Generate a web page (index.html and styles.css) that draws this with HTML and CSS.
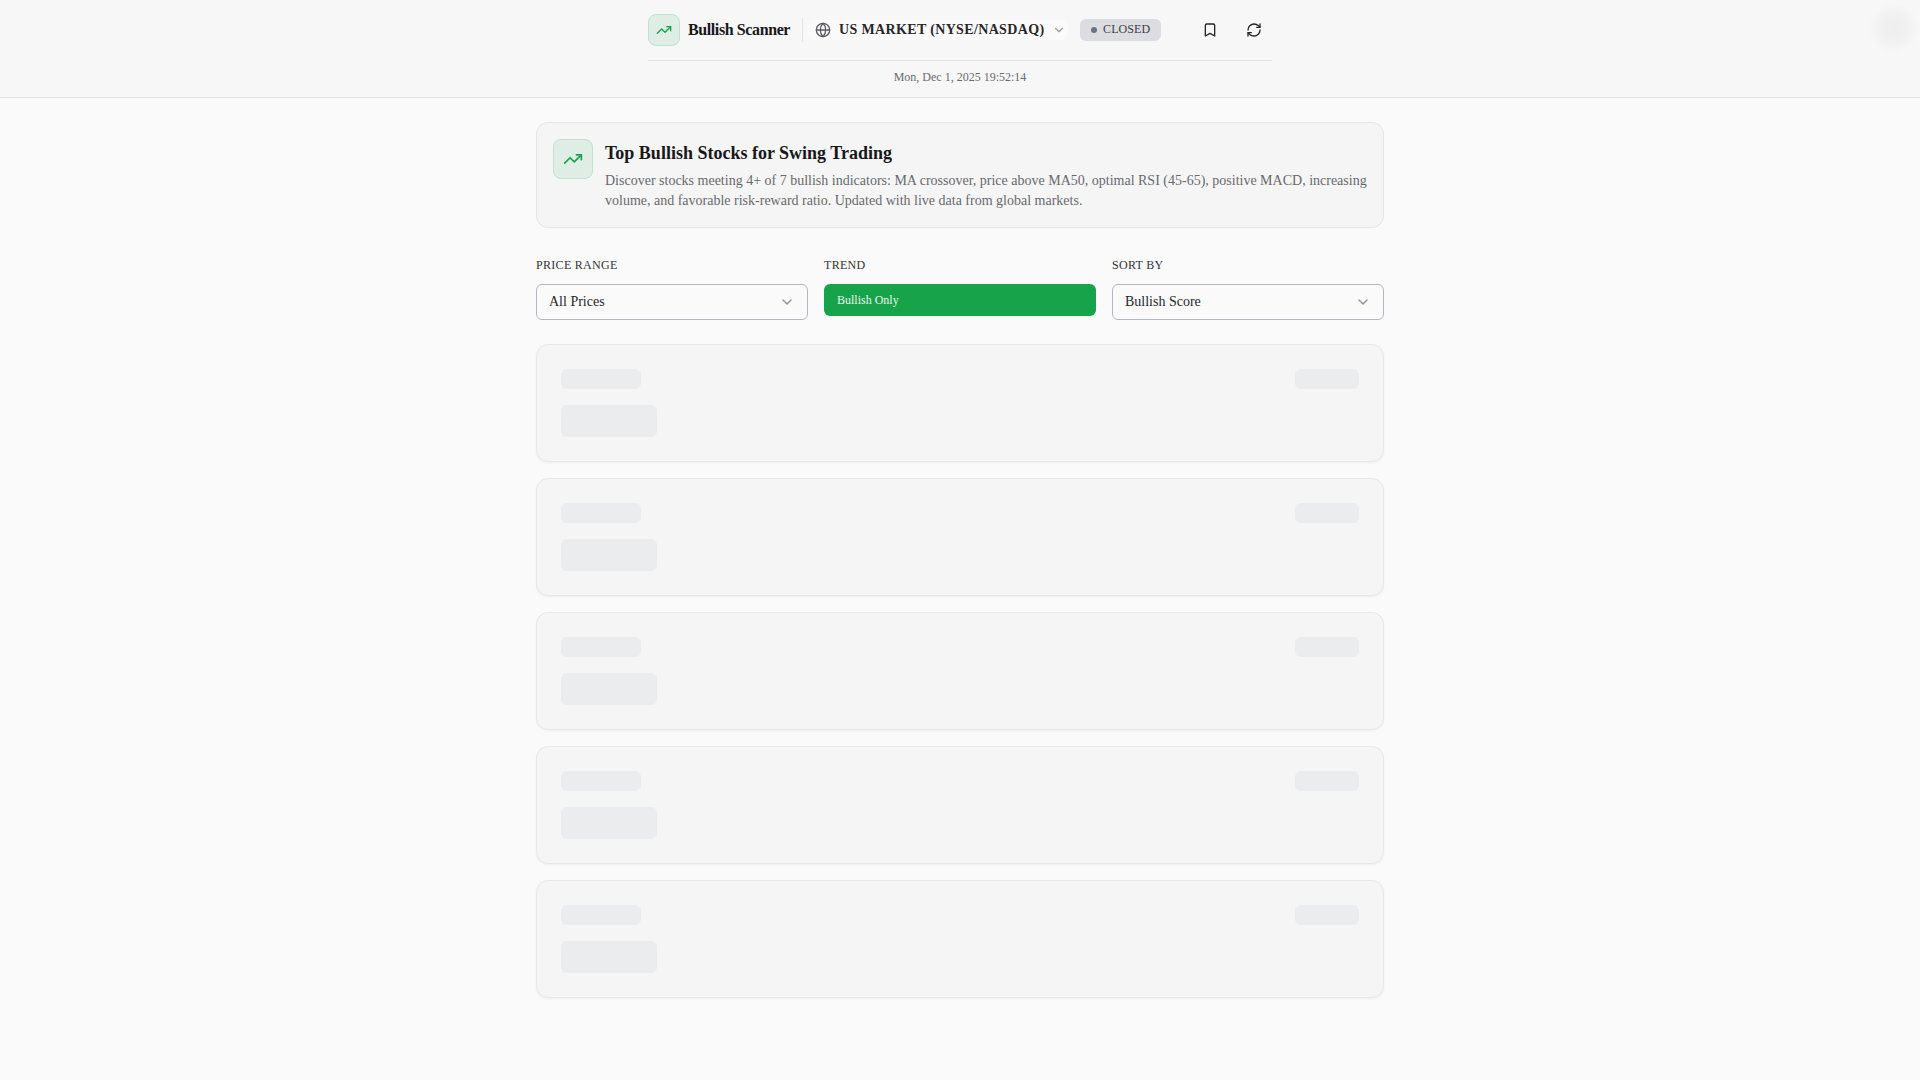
FILE: index.html
```html
<!DOCTYPE html>
<html lang="en">
<head>
<meta charset="utf-8">
<title>Bullish Scanner</title>
<link rel="stylesheet" href="styles.css">
</head>
<body>
<header class="header">
  <div class="header-inner">
    <div class="top-row">
      <div class="brand">
        <span class="logo logo-sm">
          <svg width="16" height="16" viewBox="0 0 24 24" fill="none" stroke="currentColor" stroke-width="2" stroke-linecap="round" stroke-linejoin="round"><polyline points="22 7 13.5 15.5 8.5 10.5 2 17"/><polyline points="16 7 22 7 22 13"/></svg>
        </span>
        <span class="brand-name">Bullish Scanner</span>
      </div>
      <span class="divider"></span>
      <div class="market">
        <svg class="globe" width="16" height="16" viewBox="0 0 24 24" fill="none" stroke="currentColor" stroke-width="2" stroke-linecap="round" stroke-linejoin="round"><circle cx="12" cy="12" r="10"/><path d="M12 2a14.5 14.5 0 0 0 0 20 14.5 14.5 0 0 0 0-20"/><path d="M2 12h20"/></svg>
        <span class="market-name">US MARKET (NYSE/NASDAQ)</span>
        <svg class="chev" width="14" height="14" viewBox="0 0 24 24" fill="none" stroke="currentColor" stroke-width="2" stroke-linecap="round" stroke-linejoin="round"><path d="m6 9 6 6 6-6"/></svg>
      </div>
      <div class="status"><span class="dot"></span>CLOSED</div>
      <div class="actions">
        <button class="icon-btn" aria-label="Saved">
          <svg width="16" height="16" viewBox="0 0 24 24" fill="none" stroke="currentColor" stroke-width="2" stroke-linecap="round" stroke-linejoin="round"><path d="m19 21-7-4-7 4V5a2 2 0 0 1 2-2h10a2 2 0 0 1 2 2v16z"/></svg>
        </button>
        <button class="icon-btn" aria-label="Refresh">
          <svg width="16" height="16" viewBox="0 0 24 24" fill="none" stroke="currentColor" stroke-width="2" stroke-linecap="round" stroke-linejoin="round"><path d="M3 12a9 9 0 0 1 9-9 9.75 9.75 0 0 1 6.74 2.74L21 8"/><path d="M21 3v5h-5"/><path d="M21 12a9 9 0 0 1-9 9 9.75 9.75 0 0 1-6.74-2.74L3 16"/><path d="M8 16H3v5"/></svg>
        </button>
      </div>
    </div>
    <div class="date-row">Mon, Dec 1, 2025 19:52:14</div>
  </div>
</header>
<div class="blob"></div>
<main class="main">
  <section class="intro">
    <span class="logo logo-lg">
      <svg width="20" height="20" viewBox="0 0 24 24" fill="none" stroke="currentColor" stroke-width="2" stroke-linecap="round" stroke-linejoin="round"><polyline points="22 7 13.5 15.5 8.5 10.5 2 17"/><polyline points="16 7 22 7 22 13"/></svg>
    </span>
    <div class="intro-text">
      <h1 class="intro-title">Top Bullish Stocks for Swing Trading</h1>
      <p class="intro-desc">Discover stocks meeting 4+ of 7 bullish indicators: MA crossover, price above MA50, optimal RSI (45-65), positive MACD, increasing volume, and favorable risk-reward ratio. Updated with live data from global markets.</p>
    </div>
  </section>
  <section class="filters">
    <div class="filter">
      <div class="filter-label">PRICE RANGE</div>
      <div class="select"><span>All Prices</span>
        <svg width="16" height="16" viewBox="0 0 24 24" fill="none" stroke="currentColor" stroke-width="2" stroke-linecap="round" stroke-linejoin="round"><path d="m6 9 6 6 6-6"/></svg>
      </div>
    </div>
    <div class="filter">
      <div class="filter-label">TREND</div>
      <button class="trend-btn">Bullish Only</button>
    </div>
    <div class="filter">
      <div class="filter-label">SORT BY</div>
      <div class="select"><span>Bullish Score</span>
        <svg width="16" height="16" viewBox="0 0 24 24" fill="none" stroke="currentColor" stroke-width="2" stroke-linecap="round" stroke-linejoin="round"><path d="m6 9 6 6 6-6"/></svg>
      </div>
    </div>
  </section>
  <section class="list">
    <div class="sk-card"><div class="sk-top"><div class="sk sk-a"></div><div class="sk sk-c"></div></div><div class="sk sk-b"></div></div>
    <div class="sk-card"><div class="sk-top"><div class="sk sk-a"></div><div class="sk sk-c"></div></div><div class="sk sk-b"></div></div>
    <div class="sk-card"><div class="sk-top"><div class="sk sk-a"></div><div class="sk sk-c"></div></div><div class="sk sk-b"></div></div>
    <div class="sk-card"><div class="sk-top"><div class="sk sk-a"></div><div class="sk sk-c"></div></div><div class="sk sk-b"></div></div>
    <div class="sk-card"><div class="sk-top"><div class="sk sk-a"></div><div class="sk sk-c"></div></div><div class="sk sk-b"></div></div>
  </section>
</main>
</body>
</html>
```

FILE: styles.css
```css
* { box-sizing: border-box; }
html, body { margin: 0; padding: 0; }
body {
  min-height: 1080px;
  background: #fafafa;
  color: #18181b;
  font-family: "Liberation Serif", "Times New Roman", serif;
  position: relative;
  overflow: hidden;
}
.header {
  background: #f7f7f7;
  border-bottom: 1px solid #e4e4e7;
  height: 98px;
  display: flex;
  justify-content: center;
}
.header-inner { width: 624px; }
.top-row {
  display: flex;
  align-items: center;
  height: 61px;
  padding-bottom: 1px;
  border-bottom: 1px solid #e4e4e7;
}
.brand { display: flex; align-items: center; gap: 8px; }
.logo {
  display: flex;
  align-items: center;
  justify-content: center;
  background: #dfeee5;
  border: 1px solid #bfe3cc;
  color: #16a34a;
  flex: none;
}
.logo-sm { width: 32px; height: 32px; border-radius: 8px; }
.logo-lg { width: 40px; height: 40px; border-radius: 8px; }
.brand-name { font-size: 16px; font-weight: 700; letter-spacing: -0.4px; color: #18181b; }
.divider { width: 1px; height: 24px; background: #e4e4e7; margin: 0 4px 0 12px; }
.market {
  display: flex;
  align-items: center;
  height: 20px;
  width: 261px;
  flex: none;
  padding-left: 8px;
  background: #fafafa;
  border-radius: 6px;
}
.globe { color: #5c5c63; flex: none; }
.market-name { font-size: 14px; font-weight: 700; letter-spacing: 0.35px; margin-left: 8px; white-space: nowrap; color: #27272a; }
.chev { color: #9a9aa1; margin-left: 8px; flex: none; }
.status {
  display: flex;
  align-items: center;
  gap: 6px;
  height: 22px;
  margin-left: 12px;
  padding: 0 11px;
  background: #dcdde0;
  border-radius: 6px;
  font-size: 12px;
  color: #3f3f46;
  letter-spacing: 0.1px;
  flex: none;
}
.dot { width: 6px; height: 6px; border-radius: 50%; background: #6b7280; }
.actions { display: flex; gap: 12px; margin-left: 33px; flex: none; }
.icon-btn {
  width: 32px;
  height: 32px;
  display: flex;
  align-items: center;
  justify-content: center;
  background: none;
  border: 0;
  padding: 0;
  color: #27272a;
}
.date-row {
  text-align: center;
  font-size: 12px;
  line-height: 16px;
  padding-top: 8px;
  color: #6b6b6f;
}
.blob {
  position: absolute;
  left: 1868px;
  top: 2px;
  width: 52px;
  height: 52px;
  border-radius: 50%;
  background: radial-gradient(circle, #eeeeee 0%, #f0f0f0 30%, rgba(247, 247, 247, 0) 70%);
}
.main { width: 848px; margin: 0 auto; padding-top: 24px; }
.intro {
  display: flex;
  gap: 12px;
  padding: 16px;
  height: 106px;
  background: #f5f5f5;
  border: 1px solid #e4e4e7;
  border-radius: 12px;
}
.intro-text { flex: 1; min-width: 0; }
.intro-title {
  margin: 0 0 4px;
  font-size: 18px;
  line-height: 28px;
  font-weight: 700;
  color: #18181b;
}
.intro-desc { margin: 0; font-size: 14px; line-height: 20px; color: #69696e; }
.filters {
  display: grid;
  grid-template-columns: repeat(3, 1fr);
  gap: 16px;
  margin-top: 29px;
}
.filter-label {
  font-size: 12px;
  line-height: 16px;
  letter-spacing: 0.3px;
  color: #333338;
  margin-bottom: 11px;
}
.select {
  display: flex;
  align-items: center;
  justify-content: space-between;
  height: 36px;
  padding: 0 12px;
  background: #fafafa;
  border: 1px solid #b4b6c4;
  border-radius: 6px;
  font-size: 14px;
  color: #27272a;
}
.select svg { color: #8f8f96; }
.trend-btn {
  display: block;
  width: 100%;
  height: 32px;
  padding: 0 13px;
  background: #16a34a;
  border: 0;
  border-radius: 6px;
  color: #e8f5ec;
  font: 12px "Liberation Serif", "Times New Roman", serif;
  text-align: left;
}
.list { display: flex; flex-direction: column; gap: 16px; margin-top: 24px; }
.sk-card {
  height: 118px;
  padding: 24px;
  background: #f5f5f5;
  border: 1px solid #e8e8ea;
  border-radius: 12px;
  box-shadow: 0 1px 2px rgba(0, 0, 0, 0.05);
}
.sk-top { display: flex; justify-content: space-between; }
.sk { background: #ebecee; border-radius: 6px; }
.sk-a { width: 80px; height: 20px; }
.sk-c { width: 64px; height: 20px; }
.sk-b { width: 96px; height: 32px; margin-top: 16px; border-radius: 6px; }
```
